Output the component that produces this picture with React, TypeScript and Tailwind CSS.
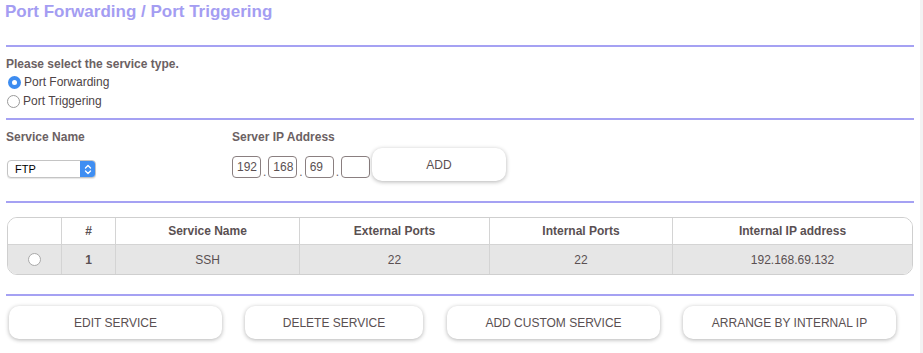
import React from "react";

const Rule = () => <div className="mx-[6px] h-[2px] bg-[#a5a1f3]" />;

const Radio = ({ checked }: { checked?: boolean }) =>
  checked ? (
    <span className="flex h-[13px] w-[13px] items-center justify-center rounded-full bg-[#3d8cf0]">
      <span className="h-[5px] w-[5px] rounded-full bg-white" />
    </span>
  ) : (
    <span className="h-[13px] w-[13px] rounded-full border border-[#9a9a9a] bg-white" />
  );

const Button = ({ label, className = "" }: { label: string; className?: string }) => (
  <div
    className={`flex h-[33px] items-center justify-center rounded-[10px] bg-white text-[12px] text-[#5a5052] shadow-[0_1px_4px_rgba(0,0,0,0.3)] ${className}`}
  >
    {label}
  </div>
);

const IpBox = ({ value }: { value: string }) => (
  <div className="flex h-[22px] w-[29px] items-center rounded-[4px] border border-[#8a7f80] pl-[4px] text-[12px] text-[#5a5052]">
    {value}
  </div>
);

const Dot = () => <span className="mx-[2px] text-[12px] leading-[12px]">.</span>;

const cols = ["w-[54px]", "w-[54px]", "w-[184px]", "w-[190px]", "w-[183px]", "flex-1"];

export default function App() {
  return (
    <div
      className="flex h-[353px] w-[923px] bg-white text-[#6b6163]"
      style={{ fontFamily: '"Liberation Sans", Arial, sans-serif' }}
    >
      <div className="flex w-[920px] flex-col">
        <h1 className="ml-[5px] mt-[2px] text-[17px] font-bold leading-[20px] text-[#a49df2]">
          Port Forwarding / Port Triggering
        </h1>
        <div className="mt-[23px]">
          <Rule />
        </div>

        <p className="ml-[6px] mt-[10px] text-[12px] font-bold leading-[14px]">
          Please select the service type.
        </p>
        <div className="ml-[8px] mt-[5px] flex flex-col gap-[6px] text-[12px] leading-[13px] text-[#4e4446]">
          <label className="flex items-center gap-[3px]">
            <Radio checked />
            Port Forwarding
          </label>
          <label className="flex items-center gap-[3px] -ml-[1px]">
            <Radio />
            Port Triggering
          </label>
        </div>
        <div className="mt-[10px]">
          <Rule />
        </div>

        <div className="mt-[10px] flex">
          <div className="ml-[6px] w-[226px]">
            <p className="text-[12px] font-bold leading-[14px]">Service Name</p>
            <div className="ml-[1px] mt-[16px] flex h-[18px] w-[89px] overflow-hidden rounded-[4px] border border-[#c4c4c4] bg-white shadow-[0_1px_1px_rgba(0,0,0,0.1)]">
              <span className="flex-1 pl-[7px] text-[11px] leading-[16px] text-black">FTP</span>
              <span className="flex w-[15px] items-center justify-center bg-[#3f8ef2]">
                <svg width="8" height="11" viewBox="0 0 8 11" fill="none" stroke="white" strokeWidth="1.4" strokeLinecap="round" strokeLinejoin="round">
                  <path d="M1.5 4 L4 1.5 L6.5 4" />
                  <path d="M1.5 7 L4 9.5 L6.5 7" />
                </svg>
              </span>
            </div>
          </div>
          <div>
            <p className="text-[12px] font-bold leading-[14px]">Server IP Address</p>
            <div className="mt-[4px] flex items-center">
              <div className="mt-[4px] flex items-end">
                <IpBox value="192" />
                <Dot />
                <IpBox value="168" />
                <Dot />
                <IpBox value="69" />
                <Dot />
                <IpBox value="" />
              </div>
              <Button label="ADD" className="ml-[2px] w-[134px]" />
            </div>
          </div>
        </div>
        <div className="mt-[20px]">
          <Rule />
        </div>

        <div className="mx-[7px] mt-[14px] overflow-hidden rounded-[10px] border border-[#cfcfcf] text-[12px] text-[#5a5052]">
          <div className="flex h-[26px] bg-white font-bold">
            {["", "#", "Service Name", "External Ports", "Internal Ports", "Internal IP address"].map((h, i) => (
              <div
                key={i}
                className={`${cols[i]} flex items-center justify-center ${i < 5 ? "border-r border-[#d4d4d4]" : ""}`}
              >
                {h}
              </div>
            ))}
          </div>
          <div className="flex h-[30px] border-t border-[#d4d4d4] bg-[#e6e6e6]">
            {["", "1", "SSH", "22", "22", "192.168.69.132"].map((c, i) => (
              <div
                key={i}
                className={`${cols[i]} flex items-center justify-center ${i === 1 ? "font-bold" : ""} ${i < 5 ? "border-r border-[#d4d4d4]" : ""}`}
              >
                {i === 0 ? (
                  <span className="h-[13px] w-[13px] rounded-full border border-[#a8a8a8] bg-white" />
                ) : (
                  c
                )}
              </div>
            ))}
          </div>
        </div>
        <div className="mt-[19px]">
          <Rule />
        </div>

        <div className="mt-[10px] flex">
          <Button label="EDIT SERVICE" className="ml-[9px] w-[213px]" />
          <Button label="DELETE SERVICE" className="ml-[23px] w-[178px]" />
          <Button label="ADD CUSTOM SERVICE" className="ml-[24px] w-[213px]" />
          <Button label="ARRANGE BY INTERNAL IP" className="ml-[23px] w-[213px]" />
        </div>
      </div>
      <div className="w-[3px] bg-[#f3f3f3]" />
    </div>
  );
}
